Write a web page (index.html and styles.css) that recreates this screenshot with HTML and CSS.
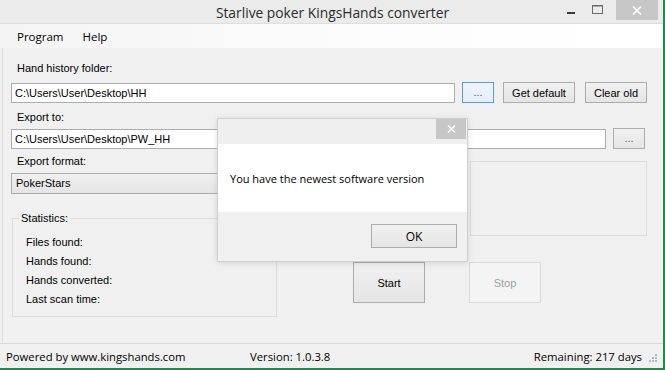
FILE: index.html
```html
<!DOCTYPE html>
<html lang="en">
<head>
    <meta charset="UTF-8">
    <meta name="viewport" content="width=device-width, initial-scale=1.0">
    <title>Starlive poker KingsHands converter</title>
    <link rel="stylesheet" href="styles.css">
</head>
<body>
    <div class="window">
        <div class="titlebar">
            <div></div>
            <div class="title">Starlive poker KingsHands converter</div>
            <div class="controls">
                <span class="ctl ctl-min">
                    <svg width="8" height="2" viewBox="0 0 8 2"><rect width="8" height="2" fill="#3a3a3a"/></svg>
                </span>
                <span class="ctl ctl-max">
                    <svg width="11" height="9" viewBox="0 0 11 9"><rect x="0.5" y="0.5" width="10" height="8" fill="none" stroke="#6a6a6a"/><rect x="0.5" y="0.5" width="10" height="1" fill="#6a6a6a"/></svg>
                </span>
                <span class="ctl ctl-close">
                    <svg width="10" height="9" viewBox="0 0 10 9"><path d="M1 0.5 L9 8.5 M9 0.5 L1 8.5" stroke="#fff" stroke-width="1.6"/></svg>
                </span>
            </div>
        </div>

        <div class="menubar">
            <span class="menu-item">Program</span>
            <span class="menu-item">Help</span>
        </div>

        <div class="client">
            <div class="label">Hand history folder:</div>
            <div class="row">
                <div class="textbox tb-hh">C:\Users\User\Desktop\HH</div>
                <button class="btn btn-dots focused">...</button>
                <button class="btn btn-default">Get default</button>
                <button class="btn btn-clear">Clear old</button>
            </div>

            <div class="label label-export">Export to:</div>
            <div class="row row-export">
                <div class="textbox tb-export">C:\Users\User\Desktop\PW_HH</div>
                <button class="btn btn-dots">...</button>
            </div>

            <div class="lower">
                <div class="left-col">
                    <div class="label label-format">Export format:</div>
                    <div class="combo">PokerStars</div>

                    <fieldset class="stats">
                        <legend>Statistics:</legend>
                        <div class="stat">Files found:</div>
                        <div class="stat">Hands found:</div>
                        <div class="stat">Hands converted:</div>
                        <div class="stat">Last scan time:</div>
                    </fieldset>
                </div>

                <div class="right-col">
                    <div class="panel"></div>
                    <div class="actions">
                        <button class="btn btn-big">Start</button>
                        <button class="btn btn-big disabled">Stop</button>
                    </div>
                </div>
            </div>

            <!-- message box over the main form -->
            <div class="dialog">
                <div class="dialog-title">
                    <span class="dialog-close">
                        <svg width="9" height="8" viewBox="0 0 9 8"><path d="M1 0.5 L8 7.5 M8 0.5 L1 7.5" stroke="#fff" stroke-width="1.5"/></svg>
                    </span>
                </div>
                <div class="dialog-body">You have the newest software version</div>
                <div class="dialog-footer">
                    <button class="btn btn-ok">OK</button>
                </div>
            </div>
        </div>

        <div class="statusbar">
            <span class="status-powered">Powered by www.kingshands.com</span>
            <span class="status-version">Version: 1.0.3.8</span>
            <span class="status-remaining">Remaining: 217 days</span>
            <span class="grip">
                <svg width="10" height="10" viewBox="0 0 10 10" fill="#b8b8b8">
                    <rect x="7" y="1" width="2" height="2"/>
                    <rect x="4" y="4" width="2" height="2"/><rect x="7" y="4" width="2" height="2"/>
                    <rect x="1" y="7" width="2" height="2"/><rect x="4" y="7" width="2" height="2"/><rect x="7" y="7" width="2" height="2"/>
                </svg>
            </span>
        </div>
    </div>
</body>
</html>
```

FILE: styles.css
```css
* {
    box-sizing: border-box;
}
body {
    margin: 0;
    background-color: #f0f0f0;
    font-family: "Liberation Sans", Arial, sans-serif;
    font-size: 11px;
    color: #000;
    overflow: hidden;
}
.window {
    width: 665px;
    height: 370px;
    display: flex;
    flex-direction: column;
    background-color: #f0f0f0;
    border-right: 2px solid #23894b;
    border-bottom: 2px solid #23894b;
}

/* title bar */
.titlebar {
    height: 24px;
    display: grid;
    grid-template-columns: 1fr auto 1fr;
    align-items: center;
    background-color: #ebebeb;
    border-bottom: 1px solid #dedede;
}
.title {
    font-family: "Open Sans", sans-serif;
    font-size: 13.8px;
    color: #2b2b2b;
    padding-top: 1px;
    padding-left: 2px;
}
.controls {
    justify-self: end;
    display: flex;
    align-self: start;
    padding-right: 5px;
}
.ctl {
    display: flex;
    align-items: center;
    justify-content: center;
}
.ctl-min {
    width: 26px;
    height: 20px;
    padding-top: 5px;
}
.ctl-max {
    width: 26px;
    height: 20px;
    margin-right: 6px;
    padding-bottom: 1px;
}
.ctl-close {
    width: 42px;
    height: 20px;
    background-color: #c7c7c7;
}

/* menu */
.menubar {
    height: 24px;
    display: flex;
    align-items: center;
    padding-left: 10px;
    background: linear-gradient(to right, #f4f4f4, #fdfdfd 60%, #ffffff);
    font-family: "Open Sans", sans-serif;
    font-size: 11.5px;
}
.menu-item {
    padding: 0 7px;
    margin-right: 5px;
}

/* main form */
.client {
    position: relative;
    flex: 1;
    padding: 14px 0 0 8px;
    margin-left: 2px;
    border-left: 1px solid #dcdcdc;
}
.label {
    height: 13px;
    line-height: 13px;
    padding-left: 6px;
}
.row {
    display: flex;
    align-items: center;
    margin-top: 7px;
}
.label-export {
    margin-top: 8px;
}
.row-export {
    margin-top: 4px;
}
.textbox {
    height: 20px;
    line-height: 18px;
    padding: 0 3px;
    background-color: #fff;
    border: 1px solid #abadb3;
    white-space: nowrap;
}
.tb-hh {
    width: 444px;
}
.tb-export {
    width: 595px;
}
.btn {
    height: 21px;
    padding: 0;
    font-family: "Liberation Sans", Arial, sans-serif;
    font-size: 11px;
    color: #000;
    background: linear-gradient(#f0f0f0, #e5e5e5);
    border: 1px solid #acacac;
}
.btn-dots {
    width: 32px;
    margin-left: 7px;
    color: #555;
    line-height: 19px;
}
.btn-dots.focused {
    border-color: #569de5;
    background: linear-gradient(#eef5fc, #e3eefa);
}
.btn-default {
    width: 72px;
    margin-left: 9px;
}
.btn-clear {
    width: 62px;
    margin-left: 10px;
}

.lower {
    display: flex;
    align-items: flex-start;
}
.left-col {
    width: 266px;
}
.label-format {
    margin-top: 6px;
}
.combo {
    height: 21px;
    line-height: 19px;
    margin-top: 5px;
    padding: 0 4px;
    background: linear-gradient(#f0f0f0, #e5e5e5);
    border: 1px solid #acacac;
}
.stats {
    width: 265px;
    margin: 18px 0 0 1px;
    padding: 8px 0 7px 13px;
    border: 1px solid #dcdcdc;
    min-width: 0;
}
.stats legend {
    padding: 0 2px;
    margin-left: -7px;
    line-height: 13px;
}
.stat {
    height: 19px;
    line-height: 19px;
}
.right-col {
    width: 294px;
    margin-left: 76px;
}
.panel {
    width: 177px;
    height: 75px;
    margin: 12px 0 0 117px;
    border: 1px solid #dcdcdc;
}
.actions {
    display: flex;
    margin-top: 26px;
}
.btn-big {
    width: 72px;
    height: 41px;
}
.btn-big.disabled {
    margin-left: 44px;
    color: #a0a0a0;
    background: #f4f4f4;
    border-color: #d9d9d9;
}

/* message box */
.dialog {
    position: absolute;
    left: 214px;
    top: 70px;
    width: 251px;
    height: 144px;
    display: flex;
    flex-direction: column;
    background-color: #f0f0f0;
    border: 1px solid #cfcfcf;
    box-shadow: 0 1px 6px rgba(0, 0, 0, 0.12);
}
.dialog-title {
    height: 25px;
    display: flex;
    justify-content: flex-end;
    align-items: flex-start;
    background-color: #efefef;
}
.dialog-close {
    width: 30px;
    height: 20px;
    margin-right: 1px;
    display: flex;
    align-items: center;
    justify-content: center;
    background-color: #c7c7c7;
}
.dialog-body {
    height: 68px;
    display: flex;
    align-items: center;
    padding-left: 12px;
    background-color: #fff;
    font-family: "Open Sans", sans-serif;
    font-size: 11px;
    color: #000;
}
.dialog-footer {
    flex: 1;
    display: flex;
    justify-content: flex-end;
    align-items: flex-start;
    padding: 12px 10px 0 0;
}
.btn-ok {
    width: 86px;
    height: 24px;
    font-family: "Open Sans", sans-serif;
    font-size: 12px;
}

/* status bar */
.statusbar {
    height: 25px;
    display: flex;
    align-items: center;
    padding-left: 6px;
    border-top: 1px solid #dadada;
    font-family: "Open Sans", sans-serif;
    font-size: 11.3px;
}
.status-powered {
    width: 244px;
}
.status-remaining {
    margin-left: auto;
}
.grip {
    width: 21px;
    display: flex;
    justify-content: center;
    padding-top: 3px;
}
```
